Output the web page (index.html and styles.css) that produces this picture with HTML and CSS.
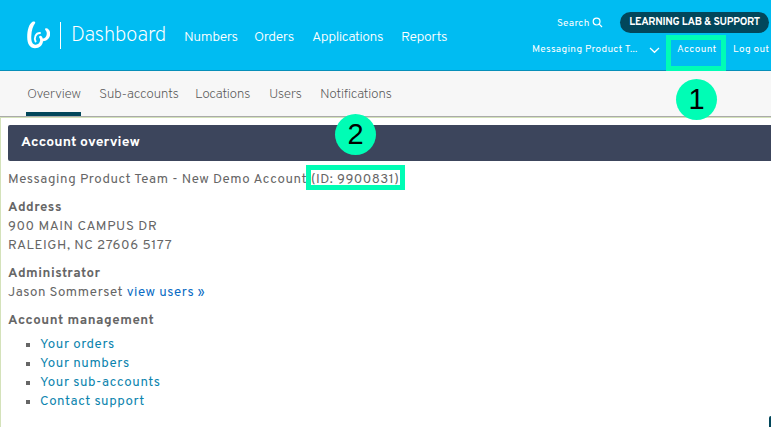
FILE: index.html
```html
<!DOCTYPE html>
<html lang="en">
<head>
<meta charset="utf-8">
<title>Dashboard</title>
<link rel="stylesheet" href="styles.css">
</head>
<body>
<header class="top">
  <svg class="logo" viewBox="0 0 24 28" width="24" height="28"><path d="M6.200 1C3 3 1.200 9 1.200 16c0 7 2.800 11.300 7.800 11.300 4.600 0 7.600-3 8-7 3.900.1 7.200-3.200 7.200-7.500 0-3-1.700-5.300-4-5.500-1.200 0-1.500 1.200-.7 2 1.300 1.300 1.500 3 1 5-.5 2-1.800 3.200-3.800 3.100-.4-1.700-1.200-2.700-2.300-2.700-1.400.2-1.700 1.300-.9 2.300.7.900.8 2 .5 3.100-.6 2.400-2.300 3.800-4.600 3.600C6.200 23.400 5 20 5.300 15 5.500 9.500 7 5 9.200 2 9.600 1 8 0 6.200 1z" fill="#fff"/><path d="M9.600 20.500c-1.800-3.500 0-8.500 4.400-8.500" fill="none" stroke="#fff" stroke-width="1.900" stroke-linecap="round"/></svg>
  <div class="brand">Dashboard</div>
  <nav class="main-nav"><a class="n1">Numbers</a><a class="n2">Orders</a><a class="n3">Applications</a><a class="n4">Reports</a></nav>
  <div class="tools">
    <div class="tools-row">
      <span class="search">Search</span>
      <svg class="glass" width="11" height="11" viewBox="0 0 11 11"><circle cx="4.600" cy="4.600" r="3.400"/><path d="M7.200 7.200L10 10"/></svg>
      <a class="pill">LEARNING LAB &amp; SUPPORT</a>
    </div>
    <div class="tools-row second">
      <span class="org">Messaging Product T...</span>
      <svg class="chev" width="11" height="7" viewBox="0 0 11 7"><path d="M1 1l4.500 4.300L10 1"/></svg>
      <a class="account">Account</a>
      <a class="logout">Log out</a>
    </div>
  </div>
</header>
<nav class="tabs"><a class="t1 active">Overview</a><a class="t2">Sub-accounts</a><a class="t3">Locations</a><a class="t4">Users</a><a class="t5">Notifications</a></nav>
<main>
  <h1>Account overview</h1>
  <p class="name"><span class="team">Messaging Product Team - New Demo Account</span><span class="id">(ID: 9900831)</span></p>
  <section><h2>Address</h2><p class="caps">900 MAIN CAMPUS DR</p><p class="zip">RALEIGH, NC 27606 5177</p></section>
  <section><h2>Administrator</h2><p class="admin">Jason Sommerset <a>view users »</a></p></section>
  <section><h2>Account management</h2>
    <ul><li><a>Your orders</a></li><li><a>Your numbers</a></li><li><a>Your sub-accounts</a></li><li><a>Contact support</a></li></ul>
  </section>
</main>
<div class="frame frame-account"></div>
<div class="frame frame-id"></div>
<div class="step step-one">1</div>
<div class="step step-two">2</div>
<div class="help"></div>
</body>
</html>
```
FILE: styles.css
```css
* { box-sizing: border-box; }
body { margin: 0; height: 427px; overflow: hidden; position: relative; background: #fff; color: #666; font-family: Overpass, Roboto, sans-serif; font-size: 13.3px; }
h1, h2, p, ul { margin: 0; padding: 0; }
a, span { white-space: nowrap; }
.top { height: 71px; background: #00bcf2; border-bottom: 1px solid #078fb9; display: flex; color: #fff; }
.logo { margin: 21px 0 0 26px; flex: none; }
.brand { margin: 22px 0 0 10px; border-left: 1px solid #fff; height: 27px; line-height: 27px; padding-left: 10px; width: 125px; font-size: 21px; font-weight: 200; letter-spacing: -.55px; flex: none; }
.main-nav { display: flex; gap: 18px; padding-top: 28px; line-height: 20px; font-size: 14px; letter-spacing: -.45px; font-weight: 300; width: 263px; flex: none; }
.n1 { width: 52px; margin-left: -1px; }
.n2 { width: 40px; }
.n3 { width: 71px; }
.n4 { width: 46px; }
.tools { flex: 1; margin-left: 84px; font-size: 10px; letter-spacing: .3px; }
.tools-row { display: flex; align-items: center; }
.tools-row:first-child { padding-top: 12px; padding-left: 25px; }
.search { width: 35px; padding-top: 2px; }
.glass { margin-right: 17px; flex: none; }
.glass, .chev { fill: none; stroke: #fff; stroke-width: 1.2; }
.pill { background: #02475b; border-radius: 11px; height: 21px; line-height: 22px; width: 149px; text-align: center; font-weight: 700; flex: none; letter-spacing: -.3px; font-size: 10.5px; }
.second { padding-top: 10px; line-height: 14px; }
.org { width: 117px; }
.chev { margin-top: 1px; margin-right: 17px; flex: none; }
.account { width: 56px; }
.tabs { height: 46px; background: #f7f7f7; border-bottom: 1px solid #aaa; display: flex; gap: 15px; padding-left: 26px; line-height: 48px; font-size: 14px; font-weight: 200; letter-spacing: -.45px; color: #555; }
.tabs a { padding-left: 2px; }
.tabs .active { padding-left: 1px; }
.t1 { width: 55px; }
.t2 { width: 82px; }
.t3 { width: 59px; }
.t4 { width: 35px; }
.tabs .t2, .tabs .t5 { padding-left: 3px; }
.active { border-bottom: 4px solid #02475b; }
main { border-left: 1px solid #d4e2ba; border-top: 1px solid #d4e2ba; height: 310px; padding: 7px 0 0 7px; line-height: 19px; letter-spacing: .55px; }
h1 { height: 36px; border-radius: 2px 0 0 2px; background: #3c455c; color: #fff; line-height: 35px; padding-left: 13px; font-size: 14px; letter-spacing: .1px; }
.name { display: flex; padding-top: 9px; letter-spacing: .55px; }
.team { width: 303px; }
.id { letter-spacing: .5px; }
section { padding-top: 9px; }
h2 { font-size: 13.300px; line-height: 19px; letter-spacing: .52px; }
.caps { letter-spacing: .67px; }
.zip { letter-spacing: .58px; }
.admin a { color: #0a6cc4; }
ul { list-style: none; padding-top: 5px; }
li { height: 19px; display: flex; align-items: center; color: #0b84ae; }
li::before { content: ""; width: 4px; height: 4px; background: #666; margin: 0 10px 0 18px; }
.frame { position: absolute; border: 5px solid #00fdb5; }
.frame-account { left: 666px; top: 35px; width: 60px; height: 36px; }
.frame-id { left: 306px; top: 165px; width: 99px; height: 25px; }
.step { position: absolute; width: 41px; height: 41px; border-radius: 50%; background: #00fdb5; color: #000; font: 29px/41px "Liberation Sans", sans-serif; text-align: center; }
.step-one { left: 676px; top: 79px; }
.step-two { left: 335px; top: 114px; }
.help { position: absolute; left: 769px; top: 416px; width: 2px; height: 11px; background: #02475b; border-top-left-radius: 2px; }
```
